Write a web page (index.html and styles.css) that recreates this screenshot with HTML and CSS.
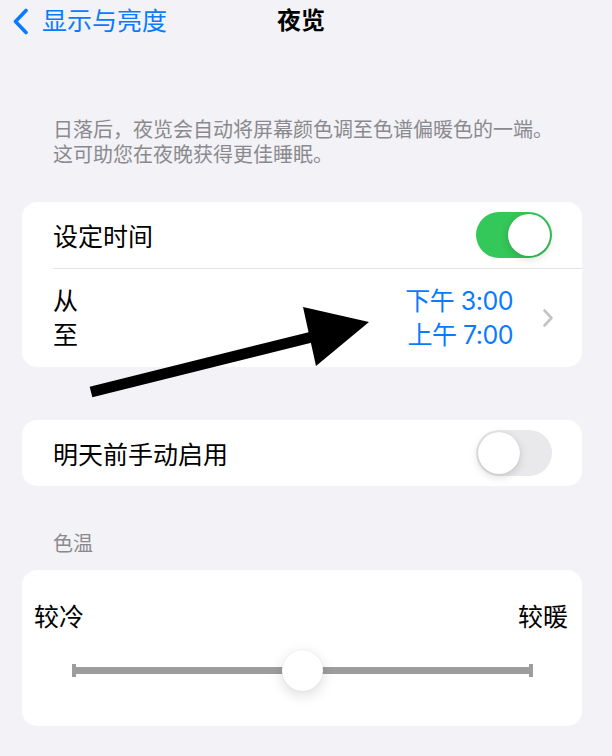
FILE: index.html
```html
<!DOCTYPE html>
<html lang="zh-CN">
<head>
    <meta charset="UTF-8">
    <meta name="viewport" content="width=device-width, initial-scale=1.0">
    <title>夜览</title>
    <link rel="stylesheet" href="styles.css">
</head>
<body>
    <div class="nav">
        <a class="back" href="#">
            <svg class="back-icon" width="17" height="27" viewBox="0 0 17 27">
                <path d="M14 2.5 L3.5 13.5 L14 24.5" fill="none" stroke="#0a7aff" stroke-width="3.6" stroke-linecap="round" stroke-linejoin="round"/>
            </svg>
            <span>显示与亮度</span>
        </a>
        <div class="nav-title">夜览</div>
    </div>

    <p class="intro">日落后，夜览会自动将屏幕颜色调至色谱偏暖色的一端。<br>这可助您在夜晚获得更佳睡眠。</p>

    <div class="card">
        <div class="row">
            <span class="label">设定时间</span>
            <span class="switch on"><span class="knob"></span></span>
        </div>
        <div class="divider"></div>
        <div class="row row-times">
            <div class="stack">
                <span>从</span>
                <span>至</span>
            </div>
            <div class="times">
                <div class="stack values">
                    <span>下午 3:00</span>
                    <span>上午 7:00</span>
                </div>
                <svg class="chevron" width="12" height="20" viewBox="0 0 12 20">
                    <path d="M2.5 2.5 L9.5 10 L2.5 17.5" fill="none" stroke="#c4c4c7" stroke-width="2.6" stroke-linecap="round" stroke-linejoin="round"/>
                </svg>
            </div>
        </div>
    </div>

    <div class="card card-gap">
        <div class="row">
            <span class="label">明天前手动启用</span>
            <span class="switch"><span class="knob"></span></span>
        </div>
    </div>

    <div class="section-title">色温</div>

    <div class="card temp">
        <div class="temp-labels">
            <span>较冷</span>
            <span>较暖</span>
        </div>
        <div class="slider">
            <div class="track"></div>
            <div class="thumb" style="left: 50%"></div>
        </div>
    </div>

    <!-- 标注箭头 -->
    <svg class="pointer" width="612" height="756" viewBox="0 0 612 756">
        <line x1="91" y1="392" x2="312" y2="337" stroke="#000" stroke-width="11"/>
        <polygon points="303,307 369,322 316,366" fill="#000"/>
    </svg>
</body>
</html>
```

FILE: styles.css
```css
* {
    margin: 0;
    padding: 0;
    box-sizing: border-box;
}

body {
    font-family: Inter, "Noto Sans CJK SC", sans-serif;
    background: #f2f2f7;
    color: #000;
    width: 612px;
    min-height: 756px;
    position: relative;
    overflow: hidden;
}

.nav {
    height: 42px;
    display: flex;
    align-items: center;
    position: relative;
    padding-left: 12px;
}

.back {
    display: flex;
    align-items: center;
    gap: 13px;
    color: #0a7aff;
    text-decoration: none;
    font-size: 25px;
    line-height: 30px;
}

.back-icon {
    display: block;
}

.nav-title {
    position: absolute;
    left: 277px;
    top: 6px;
    font-size: 24px;
    line-height: 30px;
    font-weight: bold;
}

.intro {
    margin-top: 76px;
    padding-left: 53px;
    font-size: 20px;
    line-height: 25px;
    color: #8a8a8e;
}

.card {
    margin: 0 30px 0 22px;
    background: #fff;
    border-radius: 15px;
    overflow: hidden;
}

.intro + .card {
    margin-top: 34px;
}

.card-gap {
    margin-top: 53px;
}

.row {
    height: 66px;
    display: flex;
    align-items: center;
    justify-content: space-between;
    padding: 0 30px 0 31px;
    font-size: 25px;
}

.row-times {
    height: 98px;
}

.divider {
    margin-left: 31px;
    height: 1px;
    background: #e2e2e7;
}

.stack {
    display: flex;
    flex-direction: column;
    line-height: 34px;
}

.times {
    display: flex;
    align-items: center;
    gap: 29px;
    margin-right: -2px;
}

.values {
    color: #0a7aff;
    align-items: flex-end;
    letter-spacing: -0.5px;
}

.chevron {
    display: block;
}

.switch {
    position: relative;
    width: 76px;
    height: 46px;
    border-radius: 23px;
    background: #e9e9eb;
}

.switch.on {
    background: #34c759;
}

.knob {
    position: absolute;
    top: 2px;
    left: 2px;
    width: 42px;
    height: 42px;
    border-radius: 50%;
    background: #fff;
    box-shadow: 0 3px 8px rgba(0, 0, 0, 0.15), 0 0 1px rgba(0, 0, 0, 0.2);
}

.switch.on .knob {
    left: 32px;
}

.section-title {
    margin-top: 46px;
    padding-left: 53px;
    font-size: 20px;
    line-height: 25px;
    color: #8a8a8e;
}

.temp {
    margin-top: 13px;
    padding: 35px 0 35px;
}

.temp-labels {
    display: flex;
    justify-content: space-between;
    padding: 0 14px 0 12px;
    font-size: 25px;
    line-height: 25px;
}

.slider {
    position: relative;
    height: 41px;
    margin: 20px 49px 0 50px;
    display: flex;
    align-items: center;
}

.track {
    position: relative;
    width: 100%;
    height: 7px;
    background: #9d9d9d;
}

.track::before,
.track::after {
    content: '';
    position: absolute;
    top: -3px;
    width: 4px;
    height: 13px;
    background: #9d9d9d;
}

.track::before {
    left: 0;
}

.track::after {
    right: 0;
}

.thumb {
    position: absolute;
    top: 0;
    width: 41px;
    height: 41px;
    margin-left: -21px;
    border-radius: 50%;
    background: #fff;
    box-shadow: 0 4px 14px rgba(0, 0, 0, 0.14), 0 0 1px rgba(0, 0, 0, 0.15);
}

.pointer {
    position: absolute;
    top: 0;
    left: 0;
    pointer-events: none;
}
```
